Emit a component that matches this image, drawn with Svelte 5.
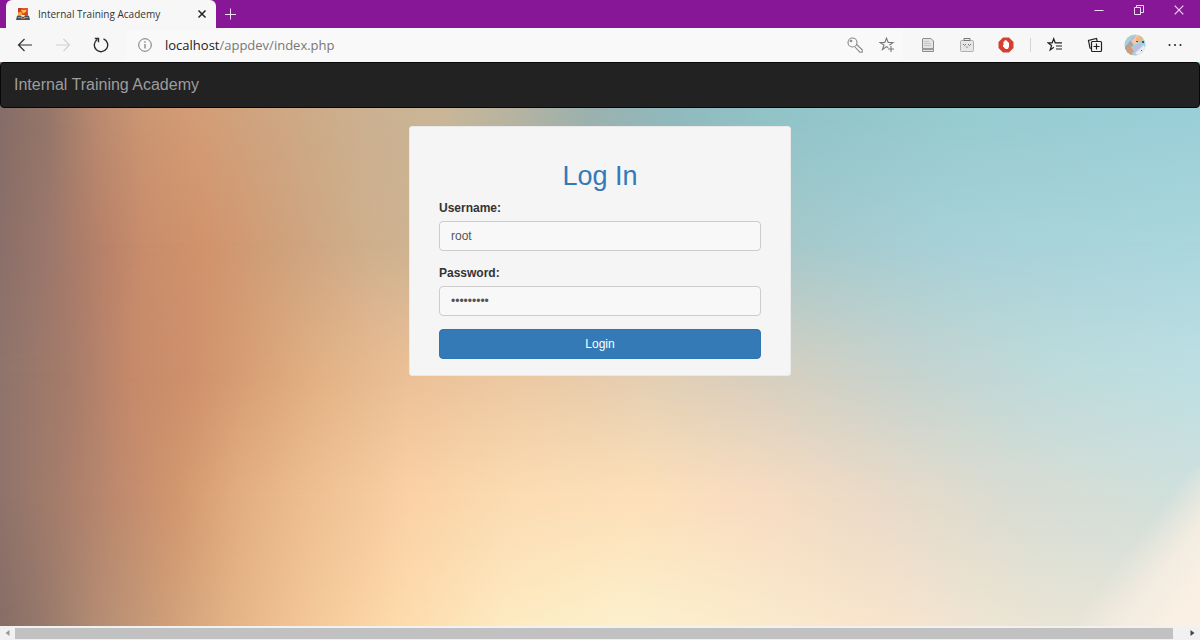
<script>
  let username = $state('root');
  let password = $state('rootadmin');

  const prevent = (event) => event.preventDefault();
</script>

<div class="window">
  <header class="tabs">
    <div class="tab">
      <svg class="favicon" width="14" height="14" viewBox="0 0 14 14" aria-hidden="true">
        <rect x="2" y="1" width="10" height="7" fill="#e2572f" />
        <path d="M2 1h4l-2 4H2z" fill="#c33b2d" />
        <path d="M5 3h5v3H7z" fill="#f8c63d" />
        <circle cx="4" cy="7" r="2" fill="#f2b134" />
        <circle cx="10" cy="7" r="2" fill="#d8432e" />
        <path d="M1 9c2-1 4 0 6 1 2-1 4-2 6-1l1 4H0z" fill="#46525e" />
        <path d="M2 10h4v1H2zM8 10h4v1H8z" fill="#7f9fb4" />
        <path d="M5 11h4v1H5z" fill="#c8763c" />
      </svg>
      <span class="tab-title">Internal Training Academy</span>
      <button class="close" aria-label="Close tab">
        <svg width="10" height="10" viewBox="0 0 10 10"><path d="M1.5 1.5l7 7M8.5 1.5l-7 7" stroke="#222" stroke-width="1.5" /></svg>
      </button>
    </div>
    <button class="new-tab" aria-label="New tab">
      <svg width="12" height="12" viewBox="0 0 12 12"><path d="M5.500 .5v11M0 6.500h11" stroke="#f3dff5" /></svg>
    </button>
    <div class="controls">
      <button aria-label="Minimize">
        <svg width="10" height="10" viewBox="0 0 10 10"><path d="M.5 5.5h9" stroke="#f0d9f3" /></svg>
      </button>
      <button aria-label="Restore">
        <svg width="10" height="10" viewBox="0 0 10 10" fill="none" stroke="#f0d9f3"><path d="M.5 2.500h6v7h-6zM2.500 2.500v-2h7v7h-3" /></svg>
      </button>
      <button aria-label="Close">
        <svg width="10" height="10" viewBox="0 0 10 10"><path d="M.7.7l8.6 8.6M9.3.7L.7 9.3" stroke="#f0d9f3" stroke-width="1.2" /></svg>
      </button>
    </div>
  </header>

  <div class="toolbar">
    <div class="nav">
      <button aria-label="Back">
        <svg width="16" height="16" viewBox="0 0 16 16" fill="none" stroke="#303030" stroke-width="1.2"><path d="M15 8H1.5M7.5 2l-6 6 6 6" /></svg>
      </button>
      <button aria-label="Forward">
        <svg width="16" height="16" viewBox="0 0 16 16" fill="none" stroke="#d2d2d2" stroke-width="1.2"><path d="M1 8h13.500M8.500 2l6 6-6 6" /></svg>
      </button>
      <button aria-label="Refresh">
        <svg width="16" height="16" viewBox="0 0 16 16" fill="none" stroke="#2b2b2b" stroke-width="1.4"><path d="M10.500 1.800A6.700 6.700 0 1 1 4.200 2.500M1.800 1.500h3.700v3.800" /></svg>
      </button>
    </div>
    <div class="address">
      <svg class="info" width="20" height="16" viewBox="0 0 20 16" fill="none" stroke="#777"><circle cx="10" cy="8" r="6.300" /><path d="M10 7v4.500M10 4.300v1.400" stroke-width="1.200" /></svg>
      <span class="url"><b>localhost</b>/appdev/index.php</span>
      <button aria-label="Saved passwords">
        <svg width="16" height="16" viewBox="0 0 16 16" fill="none" stroke="#888" stroke-width="1.100"><circle cx="5.500" cy="5.500" r="4.500" /><circle cx="4" cy="4" r=".8" /><path d="M9.600 7.500l5.600 5.300v2.400h-2.400l-4.800-5.200" /></svg>
      </button>
      <button aria-label="Add to favorites">
        <svg width="16" height="16" viewBox="0 0 16 16" fill="none" stroke="#777" stroke-width="1.100"><path d="M9.200 10.800L7.500 9.600 3.500 12.500 5 8 1 5.500h4.800L7.500 1.200 9.200 5.500H14L10.400 8.200M12 9v6M9 12h6" /></svg>
      </button>
    </div>
    <div class="extensions">
      <button aria-label="Reader extension">
        <svg width="14" height="16" viewBox="0 0 14 16"><path d="M2 1.500h8l2.500 2.500v10.500h-11V2z" fill="#e4e4e4" stroke="#8c8c8c" /><path d="M3 4.500h5M3 6.500h7M3 8.500h7" stroke="#c5c5c5" /><path d="M1 12h12" stroke="#999" stroke-width="2" /></svg>
      </button>
      <button aria-label="Shopping extension">
        <svg width="16" height="16" viewBox="0 0 16 16"><rect x="1.500" y="3.500" width="13" height="11" rx="1" fill="#e6e6e6" stroke="#b0b0b0" /><path d="M5 3.500v-2h6v2z" fill="#eee" stroke="#777" /><path d="M4 7l1.500 1.500L7 7M9 7L10.500 8.500 12 7M7 9.500l1 1 1-1" fill="none" stroke="#777" /></svg>
      </button>
      <button aria-label="Ad blocker">
        <svg width="16" height="16" viewBox="0 0 16 16"><path d="M5 .5h6L15.500 5v6L11 15.500H5L.5 11V5z" fill="#d33f31" /><path d="M5.500 8V4.500h1V3.500h1V3h1v1h1v1h1v1h.5v3.500L10 12H7.500L5 9.500V8z" fill="#fff" /></svg>
      </button>
    </div>
    <span class="divider"></span>
    <div class="actions">
      <button aria-label="Favorites">
        <svg width="16" height="16" viewBox="0 0 16 16" fill="none" stroke="#222" stroke-width="1.200"><path d="M6.800 10.300L3.200 13 4.500 8.500 1 5.800h4.200L6.700 1.800l1.500 4H15M9 9h6M9 12h6" /></svg>
      </button>
      <button aria-label="Collections">
        <svg width="16" height="16" viewBox="0 0 16 16" fill="none" stroke="#222" stroke-width="1.200"><path d="M4.500 11.500L3 11 1.500 3.500 9.500 1.500l.7 2.500" /><rect x="4.500" y="4.500" width="10" height="10" rx="1" /><path d="M9.500 6.500v6M6.500 9.500h6" /></svg>
      </button>
      <button aria-label="Profile">
        <svg width="22" height="22" viewBox="0 0 22 22"><defs><clipPath id="face"><circle cx="11" cy="11" r="10.500" /></clipPath></defs><g clip-path="url(#face)"><path d="M0 0h22v22H0z" fill="#a9ced8" /><path d="M0 14L10 3l5 1-8 18H0z" fill="#a5a4ad" /><path d="M3 12l4-1 3 6-4 5H2z" fill="#d29c79" /><path d="M7 7l6-6 6 2-8 10z" fill="#f3c5b6" /><path d="M12 4l5-3 2 4-6 4z" fill="#efb978" /><path d="M7 13L18 6l4 7-9 7z" fill="#92dadb" /><path d="M8 15l8-6 2 2-7 7z" fill="#c6b9e6" /><path d="M11 19l9-8 2 6-7 5z" fill="#eeeaf1" /><path d="M12 7h2v1h-2zM18 7h2v2h-2zM17 16h1v1h-1z" fill="#514961" /></g></svg>
      </button>
      <button aria-label="Settings and more">
        <svg width="16" height="16" viewBox="0 0 16 16" fill="#222"><circle cx="2.500" cy="8" r="1" /><circle cx="8" cy="8" r="1" /><circle cx="13.500" cy="8" r="1" /></svg>
      </button>
    </div>
  </div>

  <main class="page">
    <div class="backdrop" aria-hidden="true">
      <i class="row1"></i><i class="row2"></i><i class="row3"></i><i class="row4"></i><i class="row5"></i><i class="corner"></i>
    </div>
    <nav class="navbar"><a href="#home">Internal Training Academy</a></nav>
    <form class="card" onsubmit={prevent}>
      <h1>Log In</h1>
      <div class="field">
        <label for="username">Username:</label>
        <input id="username" type="text" bind:value={username} />
      </div>
      <div class="field">
        <label for="password">Password:</label>
        <input id="password" type="password" bind:value={password} />
      </div>
      <button class="submit" type="submit">Login</button>
    </form>
  </main>

  <footer class="scrollbar">
    <button aria-label="Scroll left"><svg width="5" height="8" viewBox="0 0 5 8"><path d="M4.500 1v6L.5 4z" fill="#999" /></svg></button>
    <span class="thumb"></span>
    <button aria-label="Scroll right"><svg width="5" height="8" viewBox="0 0 5 8"><path d="M.5 1v6l4-3z" fill="#444" /></svg></button>
  </footer>
</div>

<style>
  :global(body) { margin: 0; }
  * { box-sizing: border-box; }
  button { border: 0; padding: 0; background: none; font: inherit; display: flex; align-items: center; justify-content: center; }
  svg { flex: none; display: block; }

  .window { min-height: 100vh; display: flex; flex-direction: column; font-family: "Liberation Sans", Arial, sans-serif; font-size: 12px; color: #333; }

  .tabs { display: flex; height: 28px; padding-left: 6px; background: #881798; }
  .tab { display: flex; align-items: center; width: 210px; padding: 0 8px 0 10px; border-radius: 6px 6px 0 0; background: #f7f7f7; font-family: "Open Sans", "Noto Sans", sans-serif; font-size: 10px; }
  .tab-title { flex: 1; margin-left: 8px; white-space: nowrap; }
  .close { width: 12px; height: 16px; }
  .new-tab { width: 30px; }
  .controls { display: flex; height: 20px; margin-left: auto; padding-right: 1px; }
  .controls button { width: 40px; }

  .toolbar { display: flex; align-items: center; height: 34px; padding: 0 5px 0 6px; background: #f7f7f7; }
  .nav, .extensions, .actions { display: flex; }
  .nav button { width: 38px; height: 30px; }
  .address { flex: 1; display: flex; align-items: center; height: 30px; margin: 0 5px 0 6px; padding-left: 9px; border-radius: 3px; background: #f9f9f9; }
  .url { flex: 1; margin-left: 10px; font-family: "Open Sans", "Noto Sans", sans-serif; font-size: 13px; color: #777; white-space: nowrap; }
  .url b { font-weight: 400; color: #222; }
  .address button { width: 32px; height: 28px; }
  .extensions button { width: 39px; height: 30px; }
  .divider { width: 1px; height: 14px; margin: 0 4px 0 5px; background: #d5d5d5; }
  .actions button { width: 40px; height: 30px; }

  .page { position: relative; flex: 1; display: flex; flex-direction: column; isolation: isolate; }
  .navbar { height: 46px; display: flex; align-items: center; padding: 0 13px; border: 1px solid #080808; border-radius: 4px; background: #222; }
  .navbar a { font-size: 16px; line-height: 20px; color: #9d9d9d; text-decoration: none; }

  .backdrop { position: absolute; inset: 0; z-index: -1; overflow: hidden; }
  .backdrop i { position: absolute; inset: 0; }
  .row1 { background: linear-gradient(90deg, #866d68, #957669 4%, #b9896f 8%, #cb9672 12%, #d39c75 16%, #cfa580 22%, #ccb090 30%, #c9b697 37%, #b5b3a1 43%, #9bb1ae 49%, #90b9bd 56%, #91c4c8 65%, #97ccd1 80%, #9bcfd8); }
  .row2 { background: linear-gradient(90deg, #8a6f69, #9b776b 4%, #b58069 8%, #c98d6c 12%, #d1936c 17%, #cfa07a 23%, #ceb08e 31%, #cdb898 42%, #b5beb4 54%, #a5c9cc 67%, #a7d1d8 80%, #aad6dd); mask-image: linear-gradient(transparent 10%, #000 32%); }
  .row3 { background: linear-gradient(90deg, #8f746c, #a77c6a 6%, #c68a6a 11%, #cf906c 16%, #d8a076 21%, #e3b286 27%, #ebc097 34%, #ecc8a1 43%, #e3ceb3 54%, #d5cfc0 65%, #c5d3cf 76%, #bddbdc 88%, #bddfe3); mask-image: linear-gradient(transparent 32%, #000 55%); }
  .row4 { background: linear-gradient(90deg, #8f736a, #a67d6b 5%, #bf8a6e 10%, #d3986f 15%, #e2ae81 20%, #eebf92 26%, #fad1a5 34%, #fcdcb2 43%, #fde0b9 53%, #f8dcc1 63%, #ebdac7 72%, #d9dcd2 84%, #cfe0dd); mask-image: linear-gradient(transparent 55%, #000 77%); }
  .row5 { background: linear-gradient(90deg, #866d66, #997a6c 4%, #b38c73 8%, #cf9f79 14%, #e2b286 19%, #f3c596 25%, #fddaab 33%, #fdeac1 42%, #fcf0cd 52%, #fbebcb 62%, #f9e4cd 73%, #e9e4d5 86%, #e6e5d9); mask-image: linear-gradient(transparent 77%, #000); }
  .backdrop .corner { inset: auto 0 0 auto; width: 10%; height: 28%; background: linear-gradient(to bottom right, transparent 46%, #f3ece1 68%, #fbf0e4 88%); }

  .card { width: 382px; max-width: 100%; margin: 18px auto; padding: 34px 29px 16px; border: 1px solid #e9e9e9; border-radius: 3px; background: #f5f5f5; display: flex; flex-direction: column; gap: 13px; }
  h1 { margin: 0 0 -5px; font-size: 27px; line-height: 30px; font-weight: 400; text-align: center; color: #337ab7; }
  .field { display: flex; flex-direction: column; gap: 4px; }
  label { font-weight: 700; line-height: 18px; }
  input { width: 100%; height: 30px; padding: 0 11px; border: 1px solid #ccc; border-radius: 4px; background: #f8f8f8; font: inherit; color: #555; }
  .submit { height: 30px; border: 1px solid #3174af; border-radius: 4px; background: #337ab7; color: #fff; }

  .scrollbar { display: flex; align-items: center; height: 14px; background: #f1f1f1; }
  .scrollbar button { width: 15px; height: 14px; }
  .thumb { flex: 1; height: 11px; margin-right: 12px; background: #c1c1c1; }
</style>
